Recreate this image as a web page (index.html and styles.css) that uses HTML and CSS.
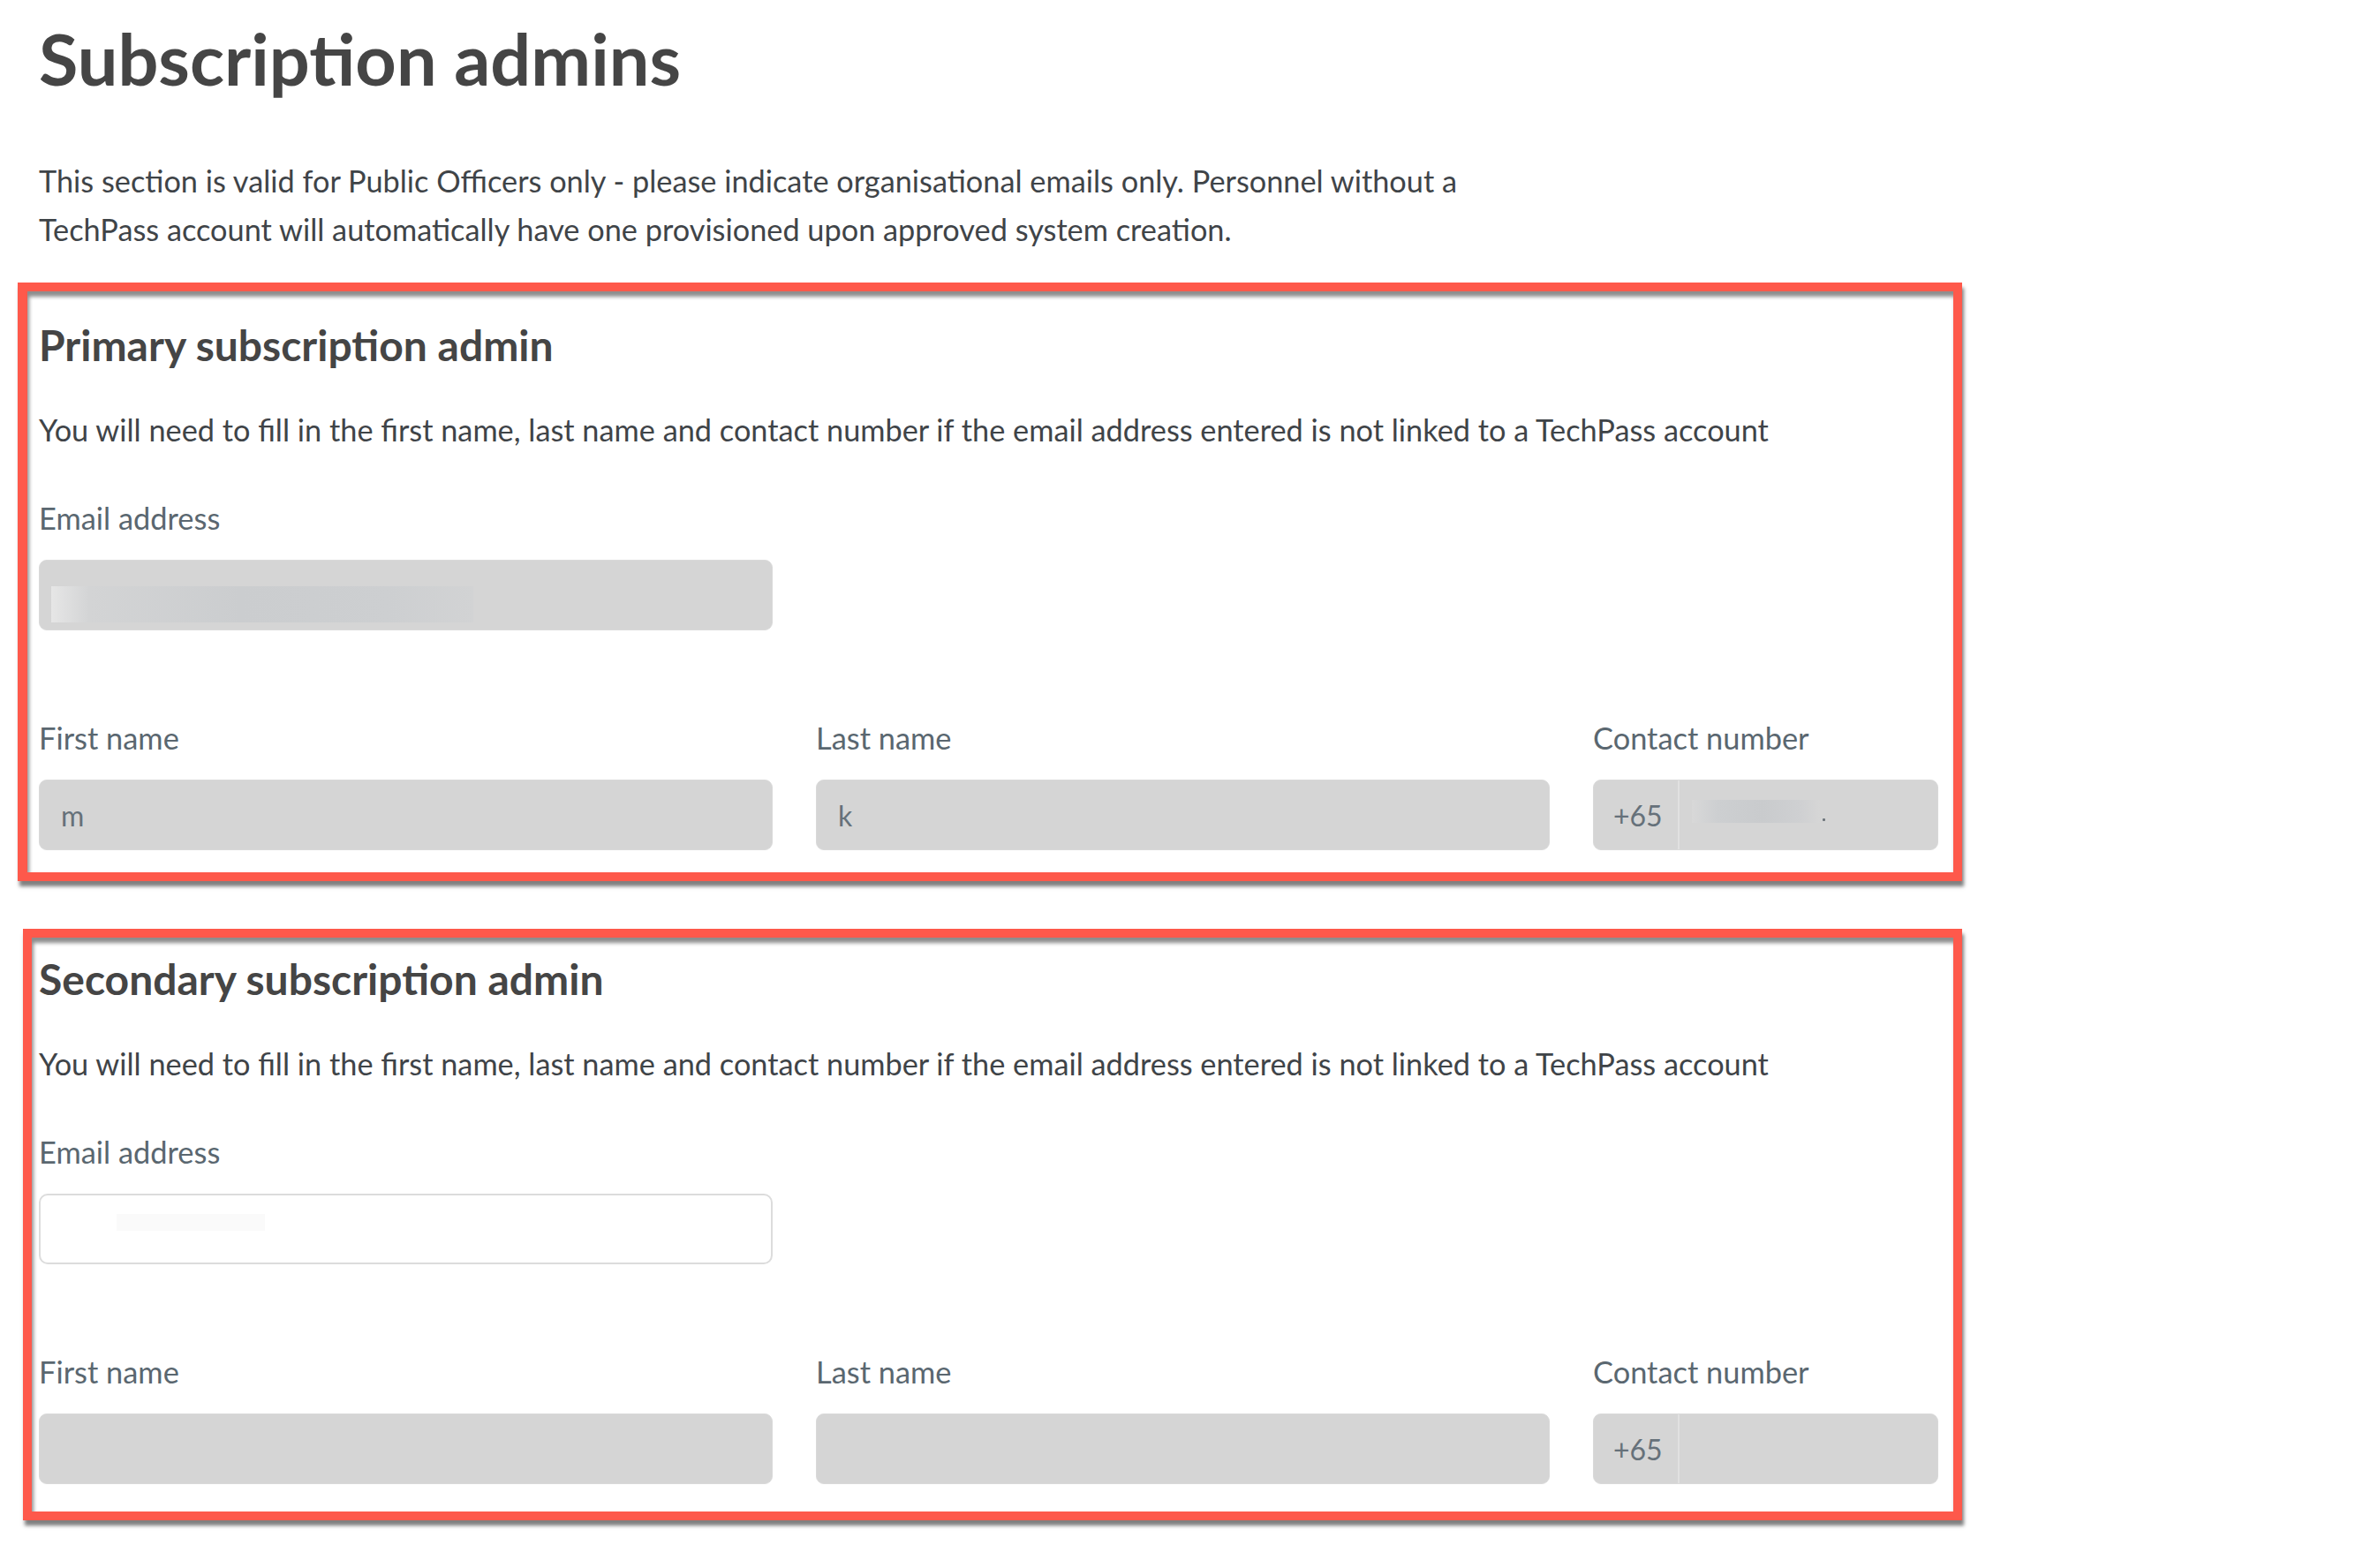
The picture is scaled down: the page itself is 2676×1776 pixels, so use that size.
FILE: index.html
```html
<!DOCTYPE html>
<html lang="en">
<head>
<meta charset="utf-8">
<title>Subscription admins</title>
<link rel="stylesheet" href="styles.css">
</head>
<body>
<main class="page">
  <h1 class="title">Subscription admins</h1>
  <p class="intro">This section is valid for Public Officers only - please indicate organisational emails only. Personnel without a TechPass account will automatically have one provisioned upon approved system creation.</p>

  <section class="admin">
    <h2 class="admin-title">Primary subscription admin</h2>
    <p class="admin-note">You will need to fill in the first name, last name and contact number if the email address entered is not linked to a TechPass account</p>
    <div class="field field-email">
      <div class="label">Email address</div>
      <div class="input input-disabled input-email"><span class="redact redact-email"></span></div>
    </div>
    <div class="row">
      <div class="field">
        <div class="label">First name</div>
        <div class="input input-disabled">m</div>
      </div>
      <div class="field">
        <div class="label">Last name</div>
        <div class="input input-disabled">k</div>
      </div>
      <div class="field">
        <div class="label">Contact number</div>
        <div class="input input-disabled input-phone">
          <span class="prefix">+65</span>
          <span class="phone-value"><span class="redact redact-phone"></span><span class="dot"></span></span>
        </div>
      </div>
    </div>
  </section>

  <section class="admin">
    <h2 class="admin-title">Secondary subscription admin</h2>
    <p class="admin-note">You will need to fill in the first name, last name and contact number if the email address entered is not linked to a TechPass account</p>
    <div class="field field-email">
      <div class="label">Email address</div>
      <div class="input input-open input-email"><span class="redact redact-faint"></span></div>
    </div>
    <div class="row">
      <div class="field">
        <div class="label">First name</div>
        <div class="input input-disabled"></div>
      </div>
      <div class="field">
        <div class="label">Last name</div>
        <div class="input input-disabled"></div>
      </div>
      <div class="field">
        <div class="label">Contact number</div>
        <div class="input input-disabled input-phone">
          <span class="prefix">+65</span>
          <span class="phone-value"></span>
        </div>
      </div>
    </div>
  </section>

  <div class="annotation annotation-primary"></div>
  <div class="annotation annotation-secondary"></div>
</main>
</body>
</html>
```

FILE: styles.css
```css
html, body {
  margin: 0;
  padding: 0;
  background: #ffffff;
}

.page {
  position: relative;
  padding: 21px 0 0 44px;
  min-height: 1776px;
  box-sizing: border-box;
  font-family: Lato, "Noto Sans", sans-serif;
}

.title {
  margin: 0;
  font-size: 81px;
  line-height: 90px;
  font-weight: 700;
  color: #454545;
}

.intro {
  margin: 66px 0 0;
  max-width: 1660px;
  font-size: 34.3px;
  line-height: 55px;
  color: #3f4448;
}

.admin {
  width: 2151px;
}

.admin:first-of-type {
  margin-top: 76px;
}

.admin + .admin {
  margin-top: 118px;
}

.admin-title {
  margin: 0;
  font-size: 48px;
  line-height: 56px;
  font-weight: 700;
  color: #454545;
}

.admin-note {
  margin: 46px 0 0;
  font-size: 34.3px;
  line-height: 44px;
  color: #3f4448;
}

.field-email {
  margin-top: 58px;
  width: 831px;
}

.row {
  display: grid;
  grid-template-columns: 831px 831px 391px;
  column-gap: 49px;
  margin-top: 102px;
}

.label {
  font-size: 34.4px;
  line-height: 40px;
  color: #5a6770;
  margin-bottom: 27px;
}

.input {
  display: flex;
  align-items: center;
  height: 80px;
  box-sizing: border-box;
  border-radius: 9px;
  padding: 0 24px;
  font-size: 32px;
  color: #66717a;
}

.input-disabled {
  background: #d5d5d5;
  border: 1px solid #d9d9d9;
}

.input-open {
  background: #ffffff;
  border: 2px solid #dcdcdc;
  border-radius: 10px;
}

.input-email {
  align-items: flex-start;
  padding-left: 13px;
}

.redact {
  display: block;
}

.redact-email {
  width: 478px;
  height: 41px;
  margin-top: 29px;
  background: linear-gradient(90deg, #e6e6e6 0%, #d3d4d5 9%, #cbcdcf 45%, #cdcfd1 80%, #d2d3d4 100%);
}

.redact-faint {
  width: 168px;
  height: 19px;
  margin-top: 21px;
  margin-left: 73px;
  background: #fafafa;
}

.input-phone {
  padding: 0;
}

.prefix {
  display: flex;
  align-items: center;
  height: 100%;
  width: 97px;
  padding-left: 22px;
  box-sizing: border-box;
  border-right: 2px solid #e1e1e1;
}

.phone-value {
  position: relative;
  display: flex;
  align-items: flex-start;
  height: 100%;
  padding-left: 14px;
}

.redact-phone {
  width: 145px;
  height: 26px;
  margin-top: 22px;
  background: linear-gradient(90deg, #d8d8d8 0%, #cdcfd1 20%, #c9cbcd 55%, #cfd0d2 85%, #d6d6d6 100%);
}

.dot {
  display: block;
  width: 3px;
  height: 3px;
  margin: 43px 0 0 3px;
  background: #6d757b;
  border-radius: 1px;
}

.annotation {
  position: absolute;
  border: 10px solid #fe594b;
  box-sizing: border-box;
  box-shadow: 2px 6px 4px rgba(0, 0, 0, 0.5), inset 2px 6px 4px rgba(0, 0, 0, 0.45);
  pointer-events: none;
}

.annotation-primary {
  left: 20px;
  top: 320px;
  width: 2202px;
  height: 678px;
  border-left-width: 11px;
}

.annotation-secondary {
  left: 26px;
  top: 1052px;
  width: 2196px;
  height: 670px;
}
```
